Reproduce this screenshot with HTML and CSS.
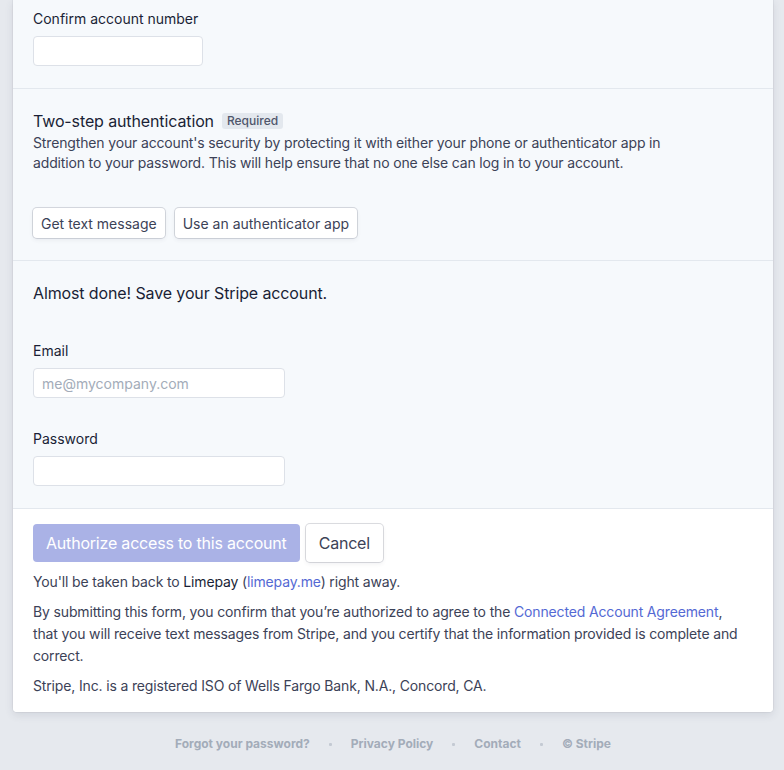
FILE: index.html
```html
<!DOCTYPE html>
<html lang="en">
<head>
    <meta charset="UTF-8">
    <meta name="viewport" content="width=device-width, initial-scale=1.0">
    <title>Connect with Stripe</title>
    <link rel="stylesheet" href="styles.css">
</head>
<body>
    <div class="card">
        <!-- Account number confirmation -->
        <div class="section first">
            <label class="field-label" for="confirm-account">Confirm account number</label>
            <input class="text-input small" type="text" id="confirm-account">
        </div>

        <!-- Two-step auth -->
        <div class="section">
            <h2 class="section-title">Two-step authentication <span class="badge">Required</span></h2>
            <p class="section-desc">Strengthen your account's security by protecting it with either your phone or authenticator app in addition to your password. This will help ensure that no one else can log in to your account.</p>
            <div class="button-row">
                <button class="btn">Get text message</button>
                <button class="btn">Use an authenticator app</button>
            </div>
        </div>

        <!-- Save account -->
        <div class="section">
            <h2 class="section-title">Almost done! Save your Stripe account.</h2>
            <div class="field email-field">
                <label class="field-label" for="email">Email</label>
                <input class="text-input" type="email" id="email" placeholder="me@mycompany.com">
            </div>
            <div class="field password-field">
                <label class="field-label" for="password">Password</label>
                <input class="text-input" type="password" id="password">
            </div>
        </div>

        <!-- Submit area -->
        <div class="submit-area">
            <div class="button-row submit-row">
                <button class="btn btn-primary" disabled>Authorize access to this account</button>
                <button class="btn btn-large">Cancel</button>
            </div>
            <p class="note">You'll be taken back to <strong>Limepay</strong> (<a href="#">limepay.me</a>) right away.</p>
            <p class="note">By submitting this form, you confirm that you’re authorized to agree to the <a href="#">Connected Account Agreement</a>, that you will receive text messages from Stripe, and you certify that the information provided is complete and correct.</p>
            <p class="note">Stripe, Inc. is a registered ISO of Wells Fargo Bank, N.A., Concord, CA.</p>
        </div>
    </div>

    <div class="page-footer">
        <a href="#">Forgot your password?</a>
        <span class="dot"></span>
        <a href="#">Privacy Policy</a>
        <span class="dot"></span>
        <a href="#">Contact</a>
        <span class="dot"></span>
        <a href="#">© Stripe</a>
    </div>
</body>
</html>
```

FILE: styles.css
```css
body {
    margin: 0;
    padding: 0;
    background-color: #e6e9ee;
    font-family: Inter, "Noto Sans", sans-serif;
    color: #1a1f36;
    -webkit-font-smoothing: antialiased;
}

.card {
    width: 760px;
    margin-left: 13px;
    background-color: #f6f9fc;
    border-radius: 0 0 4px 4px;
    box-shadow: 0 0 0 1px rgba(60, 66, 87, 0.06), 0 3px 8px rgba(60, 66, 87, 0.12);
    overflow: hidden;
}

.section {
    padding: 20px 20px 22px 20px;
    border-bottom: 1px solid #e3e8ee;
}

.section.first {
    padding-top: 9px;
}

.field-label {
    display: block;
    font-size: 14px;
    line-height: 20px;
    font-weight: 400;
    color: #1a1f36;
    margin-bottom: 7px;
}

.text-input {
    display: block;
    box-sizing: border-box;
    width: 252px;
    height: 30px;
    padding: 0 8px;
    border: 1px solid #dde1e8;
    border-radius: 4px;
    background-color: white;
    font-family: inherit;
    font-size: 14px;
    color: #1a1f36;
    outline: none;
}

.text-input.small {
    width: 170px;
}

.text-input::placeholder {
    color: #a3acb9;
}

.section-title {
    margin: 0;
    font-size: 16px;
    line-height: 24px;
    font-weight: 400;
    letter-spacing: -0.12px;
    color: #1a1f36;
    display: flex;
    align-items: center;
}

.badge {
    display: inline-block;
    margin-left: 8px;
    padding: 0 5px;
    height: 16px;
    line-height: 16px;
    font-size: 12px;
    font-weight: 500;
    letter-spacing: 0;
    color: #4f566b;
    background-color: #e3e8ee;
    border-radius: 3px;
}

.section-desc {
    margin: 0;
    width: 640px;
    font-size: 14px;
    line-height: 20px;
    letter-spacing: -0.15px;
    color: #3c4257;
}

.button-row {
    display: flex;
    gap: 10px;
    margin-top: 35px;
}

.btn {
    height: 30px;
    padding: 0 8px;
    background-color: white;
    border: none;
    border-radius: 4px;
    box-shadow: 0 0 0 1px rgba(60, 66, 87, 0.18), 0 2px 4px rgba(60, 66, 87, 0.08);
    font-family: inherit;
    font-size: 14px;
    font-weight: 400;
    color: #3c4257;
    cursor: pointer;
}

.btn-large {
    height: 38px;
    padding: 0 13px;
    font-size: 16px;
    letter-spacing: -0.2px;
}

.btn-primary {
    height: 38px;
    padding: 0 13px;
    font-size: 16px;
    letter-spacing: -0.2px;
    color: white;
    background-color: #aab2e6;
    box-shadow: none;
}

.email-field {
    margin-top: 36px;
}

.password-field {
    margin-top: 31px;
}

.submit-area {
    background-color: white;
    padding: 15px 20px 15px 20px;
}

.submit-row {
    margin-top: 0;
    gap: 6px;
    margin-bottom: 9px;
}

.note {
    margin: 0 0 8px 0;
    width: 712px;
    font-size: 14px;
    line-height: 22px;
    letter-spacing: -0.15px;
    color: #3c4257;
}

.note:last-child {
    margin-bottom: 0;
}

.note strong {
    font-weight: 400;
    color: #1a1f36;
}

.note a {
    color: #5469d4;
    text-decoration: none;
}

.page-footer {
    display: flex;
    justify-content: center;
    align-items: center;
    gap: 19px;
    margin-left: 13px;
    width: 760px;
    padding-top: 24px;
    font-size: 12px;
    line-height: 16px;
    font-weight: 700;
}

.page-footer a {
    color: #a3acb9;
    text-decoration: none;
}

.dot {
    width: 3px;
    height: 3px;
    border-radius: 1px;
    background-color: #c4cad3;
}
```
